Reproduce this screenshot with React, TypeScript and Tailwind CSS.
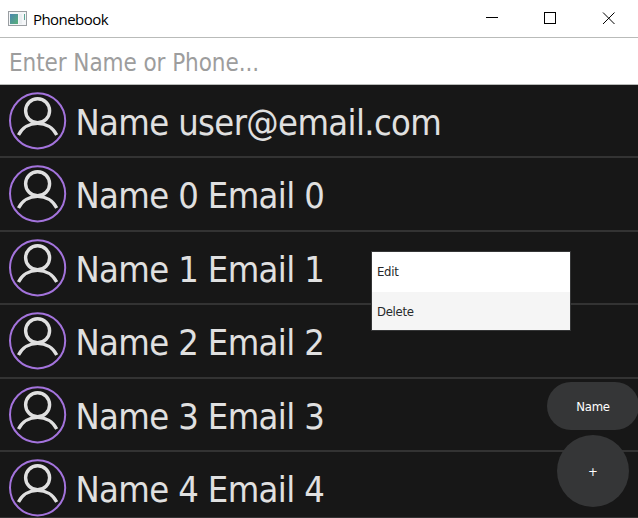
import React from "react";

const contacts = [
  "Name user@email.com",
  "Name 0 Email 0",
  "Name 1 Email 1",
  "Name 2 Email 2",
  "Name 3 Email 3",
  "Name 4 Email 4",
];

function AppIcon() {
  return (
    <svg width="19" height="15" viewBox="0 0 19 15" shapeRendering="crispEdges">
      <defs>
        <linearGradient id="screen" x1="0" y1="0" x2="1" y2="1">
          <stop offset="0" stopColor="#4a86b0" />
          <stop offset="1" stopColor="#58b078" />
        </linearGradient>
      </defs>
      <rect x="0.5" y="0.5" width="18" height="14" fill="#f4f6f8" stroke="#9a9ea2" />
      <rect x="2" y="3" width="8" height="10" fill="url(#screen)" />
      <rect x="11" y="3" width="3" height="10" fill="#e9edf0" />
      <rect x="16" y="3" width="1" height="6" fill="#5ba695" />
    </svg>
  );
}

function Avatar() {
  return (
    <svg className="shrink-0" width="58" height="58" viewBox="0 0 58 58" fill="none">
      <circle cx="28.6" cy="28.8" r="27.6" stroke="#a373dc" strokeWidth="2" />
      <circle cx="28.6" cy="18.8" r="12" stroke="#e0e0e0" strokeWidth="3.4" />
      <path d="M9.5 43A21.5 21.5 0 0 1 47.7 43" stroke="#e0e0e0" strokeWidth="3.4" />
    </svg>
  );
}

export default function App() {
  return (
    <div className="relative flex h-[518px] w-[638px] flex-col overflow-hidden bg-[#171717] font-['DejaVu_Sans_Condensed','DejaVu_Sans',sans-serif] [font-stretch:condensed]">
      <header className="flex h-[37px] shrink-0 items-center bg-white pb-px pl-2">
        <AppIcon />
        <span className="ml-[6px] pt-px font-['Open_Sans',sans-serif] text-[15px] leading-5 tracking-[-0.55px] text-black [font-stretch:normal]">Phonebook</span>
        <svg className="ml-auto mr-[22px] mt-px" width="130" height="13" viewBox="0 0 130 13" fill="none" stroke="#000">
          <path d="M0 5.5H12M58.5 .5H69.5V11.5H58.5Z" shapeRendering="crispEdges" />
          <path d="M117 .5L128.5 12M128.5 .5L117 12" />
        </svg>
      </header>
      <div className="flex h-[48px] shrink-0 items-center border-y border-[#b9bbb9] bg-white pl-[9px] pt-[3px]">
        <input
          className="w-full bg-transparent text-[24px] tracking-[-0.08px] outline-none placeholder:text-[#9d9d9d]"
          placeholder="Enter Name or Phone..."
        />
      </div>
      <main className="shrink-0">
        {contacts.map((contact) => (
          <div key={contact} className="flex h-[73.4px] items-start border-b-2 border-[#333333] pl-[9px] pt-[7px]">
            <Avatar />
            <span className="ml-[8.5px] mt-[10px] whitespace-pre text-[36px] leading-[42px] tracking-[-0.63px] text-[#e0e0e0]">
              {contact}
            </span>
          </div>
        ))}
      </main>
      <div className="absolute left-[371px] top-[251px] w-[200px] border border-[#353637] bg-white text-[13px] tracking-[-0.3px] text-[#26282a]">
        <div className="flex h-10 items-center pl-[5px]">Edit</div>
        <div className="flex h-[38px] items-center bg-[#f5f5f5] pl-[5px] pt-[2px]">Delete</div>
      </div>
      <button className="absolute left-[547px] top-[382px] flex h-12 w-[92px] items-center justify-center rounded-full bg-[#353637] pt-[2px] text-[13px] tracking-[-0.2px] text-white">
        Name
      </button>
      <button className="absolute left-[557px] top-[435px] flex size-[72px] items-center justify-center rounded-full bg-[#353637] pt-[2px] text-[13px] text-white">
        +
      </button>
      <div className="absolute inset-x-0 bottom-0 h-px bg-[#333333]" />
    </div>
  );
}
